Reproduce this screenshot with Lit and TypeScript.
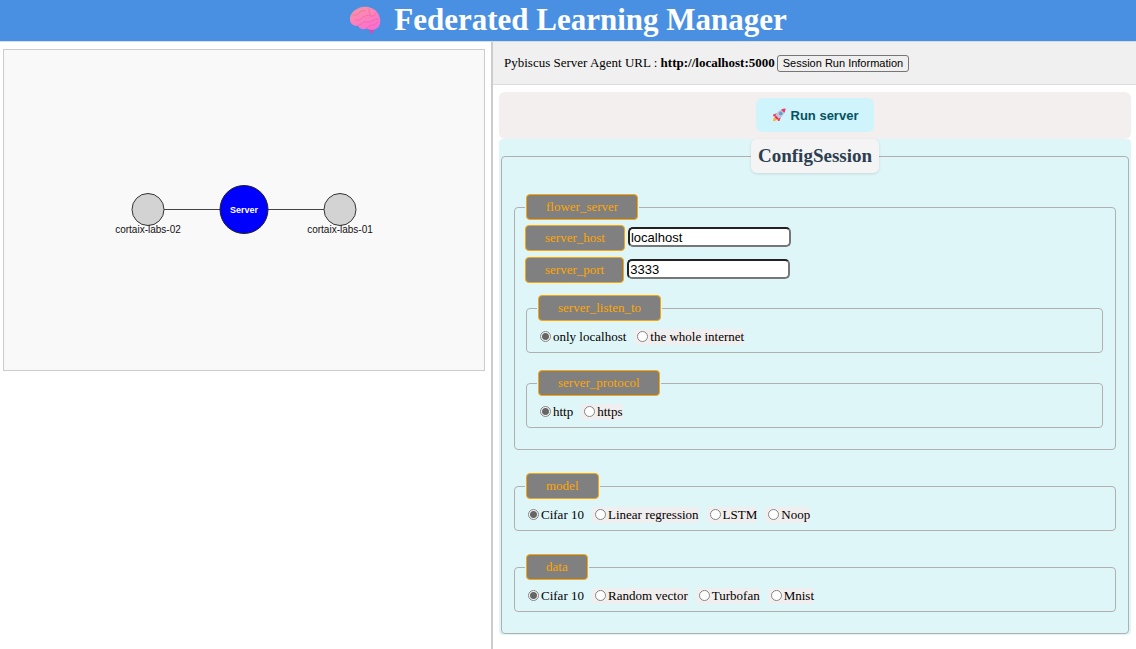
import { LitElement, html, css, svg } from "lit";
import { customElement, property } from "lit/decorators.js";

interface GraphNode {
  id: string;
  x: number;
  y: number;
}

const SERVER = { x: 240, y: 159.5, r: 24 };
const CLIENTS: GraphNode[] = [
  { id: "cortaix-labs-02", x: 144, y: 159.5 },
  { id: "cortaix-labs-01", x: 336, y: 159.5 },
];

@customElement("network-graph")
export class NetworkGraph extends LitElement {
  static styles = css`
    :host {
      display: block;
      border: 1px solid #ccc;
      background: #f9f9f9;
    }
    .canvas {
      display: block;
      width: 100%;
      height: auto;
      font-family: "Liberation Sans", Arial, sans-serif;
      font-size: 10px;
      text-anchor: middle;
    }
    .link {
      stroke: #444;
      stroke-width: 1;
    }
    .client {
      fill: #d3d3d3;
      stroke: #333;
      stroke-width: 1;
    }
    .server {
      fill: #0000ff;
      stroke: #222;
      stroke-width: 1;
    }
    .server-name {
      fill: #fff;
      font-size: 9px;
      font-weight: bold;
    }
    .client-name {
      fill: #111;
    }
  `;

  render() {
    return html`
      <svg class="canvas" viewBox="0 0 480 320" role="img" aria-label="Network">
        ${CLIENTS.map(
          (c) => svg`<line class="link" x1=${SERVER.x} y1=${SERVER.y} x2=${c.x} y2=${c.y}></line>`
        )}
        ${CLIENTS.map(
          (c) => svg`
            <circle class="client" cx=${c.x} cy=${c.y} r="16"></circle>
            <text class="client-name" x=${c.x} y="183">${c.id}</text>`
        )}
        <circle class="server" cx=${SERVER.x} cy=${SERVER.y} r=${SERVER.r}></circle>
        <text class="server-name" x=${SERVER.x} y="163">Server</text>
      </svg>
    `;
  }
}

@customElement("choice-group")
export class ChoiceGroup extends LitElement {
  @property() name = "";
  @property({ attribute: false }) options: string[] = [];

  static styles = css`
    :host {
      display: block;
    }
    .group {
      margin: 0;
      min-width: 0;
      padding: 8px 10px 7px;
      border: 1px solid #b0b0b0;
      border-radius: 4px;
    }
    .legend {
      padding: 0 1px;
    }
    .tag {
      display: block;
      box-sizing: border-box;
      height: 26px;
      padding: 0 19px;
      border: 1px solid orange;
      border-radius: 4px;
      background: #808080;
      color: orange;
      font-size: 13px;
      line-height: 24px;
    }
    .choices {
      display: flex;
      flex-wrap: wrap;
      gap: 8px;
    }
    .choice {
      display: flex;
      align-items: center;
      gap: 2px;
      height: 16px;
      padding-left: 3px;
      border-radius: 4px;
      background: #f0eeee;
      font-size: 13px;
      line-height: 16px;
    }
    .choice:has(.radio:checked) {
      background: transparent;
    }
    .radio {
      appearance: none;
      box-sizing: border-box;
      width: 11px;
      height: 11px;
      margin: 0 0 2px;
      border: 1px solid #858585;
      border-radius: 50%;
      background: #fff;
    }
    .radio:checked {
      background: radial-gradient(circle, #666 3px, #f4f4f4 4px);
    }
  `;

  render() {
    return html`
      <fieldset class="group">
        <legend class="legend"><span class="tag">${this.name}</span></legend>
        <div class="choices">
          ${this.options.map(
            (o, i) => html`<label class="choice"
              ><input class="radio" type="radio" name=${this.name} value=${o} ?checked=${i === 0} />${o}</label
            >`
          )}
        </div>
      </fieldset>
    `;
  }
}

const brain = html`<svg class="brain" viewBox="0 0 32 28" aria-hidden="true">
  <defs>
    <linearGradient id="brain-fill" x1="0" y1="0" x2="0.6" y2="1">
      <stop offset="0" stop-color="#f09a9c" />
      <stop offset="0.5" stop-color="#fd83b8" />
      <stop offset="1" stop-color="#fb6fd0" />
    </linearGradient>
  </defs>
  <path d="M19 21 L22 27.4 Q24 28.2 24 26 L24.500 21 Z" fill="#ee3fae" />
  <path
    d="M1 14 C0.500 9 4 5 8 3 C12 0.200 18 0 22 2 C27 3.500 30.500 8 31 13 C32 18 30 22 26 23.200 C23 24.500 20 23.600 18 22.500 C14 24.200 10 22.500 9 19.800 C5 20.500 1.500 18 1 14 Z"
    fill="url(#brain-fill)"
  />
  <g fill="none" stroke="#dc5fa0" stroke-width="0.800" stroke-linecap="round" opacity="0.600">
    <path d="M4 9 Q9 10 11 6 Q13 3.500 16 5" />
    <path d="M6 14 Q11 15 14 11 Q18 8 22 10" />
    <path d="M9 19.500 Q13 18.500 15 15.500 Q20 17.500 24 14.500" />
    <path d="M20 3 Q19 7 22 10 Q26 11 27 7" />
    <path d="M18 22 Q20 18.500 24 19 Q28 18.500 29 15" />
    <path d="M24 14.500 Q26 12.500 29 13" />
  </g>
</svg>`;

const rocket = html`<svg class="rocket" viewBox="0 0 14 14" aria-hidden="true">
  <path d="M1 13.200 Q0.800 10 3.200 9 L5.200 11 Q4 13.300 1 13.200 Z" fill="#ffb02e" />
  <path d="M4.800 5.200 L1.200 6.600 Q0.600 8 1.800 8.400 L4.600 8.600 Z" fill="#f83a5f" />
  <path d="M8.800 9.200 L7.600 12.800 Q6.200 13.600 5.600 12.200 L5.200 9.400 Z" fill="#f83a5f" />
  <path d="M3.200 9 Q4.500 3.800 9 1.800 L12.300 5 Q10.400 9.500 5.200 11 Z" fill="#c3c6dc" />
  <path d="M9 1.800 Q11 0.600 13.600 0.500 Q13.500 3 12.300 5 Z" fill="#f0386a" />
  <path d="M2.600 9 L4 7.800 L6.400 10.200 L5.200 11.600 Z" fill="#e0245e" />
  <circle cx="8.700" cy="5.400" r="1.500" fill="#4aa8e0" stroke="#7b86a0" stroke-width="0.600" />
</svg>`;

@customElement("app-root")
export class AppRoot extends LitElement {
  static styles = css`
    :host {
      display: flex;
      flex-direction: column;
      min-height: 100vh;
      background: #fff;
      color: #000;
      font-family: "Liberation Serif", "Times New Roman", serif;
      font-size: 13px;
    }
    .header {
      display: flex;
      justify-content: center;
      align-items: center;
      gap: 13px;
      height: 41px;
      border-bottom: 1px solid #d5dfec;
      background: #4a90e2;
    }
    .brain {
      width: 32px;
      height: 28px;
      margin-bottom: 1px;
    }
    .title {
      margin: 0 0 2px;
      color: #fff;
      font-size: 31px;
      line-height: 38px;
      font-weight: bold;
    }
    .columns {
      flex: 1;
      display: grid;
      grid-template-columns: minmax(0, 493fr) minmax(0, 643fr);
    }
    .left {
      padding: 7px 6px 0 3px;
      border-right: 2px solid #ccc;
    }
    .topbar {
      display: flex;
      align-items: center;
      gap: 2px;
      height: 42px;
      padding-left: 11px;
      border-bottom: 1px solid #ddd;
      background: #f0f0f0;
    }
    .session {
      height: 17px;
      padding: 0 5px;
      border: 1px solid #767676;
      border-radius: 3px;
      background: #efefef;
      color: #000;
      font-family: "Liberation Sans", Arial, sans-serif;
      font-size: 11px;
      line-height: 15px;
    }
    .content {
      padding: 7px 5px 0 6px;
    }
    .actions {
      display: flex;
      justify-content: center;
      padding: 6px 0 7px;
      border-radius: 6px;
      background: #f3efee;
    }
    .run {
      display: flex;
      align-items: center;
      gap: 5px;
      height: 34px;
      padding: 0 16px;
      border: 0;
      border-radius: 6px;
      background: #cff4fc;
      color: #055160;
      font-family: "Liberation Sans", Arial, sans-serif;
      font-size: 13px;
      font-weight: bold;
    }
    .rocket {
      width: 14px;
      height: 14px;
    }
    .config {
      padding: 0 2px 1px;
      border-radius: 4px;
      background: #dff6f8;
    }
    .session-set {
      display: flex;
      flex-direction: column;
      min-width: 0;
      margin: 0;
      padding: 21px 12px;
      border: 1px solid #b0b0b0;
      border-radius: 4px;
    }
    .session-title {
      margin: 0 auto;
      padding: 0 7px;
      border-radius: 6px;
      background: #f4f4f4;
      box-shadow: 0 1px 3px rgba(0, 0, 0, 0.12);
      color: #2c3e50;
      font-size: 19px;
      line-height: 34px;
      font-weight: bold;
    }
    .sections {
      display: grid;
      gap: 23px;
    }
    .server-set {
      min-width: 0;
      margin: 0;
      padding: 5px 12px 21px 10px;
      border: 1px solid #b0b0b0;
      border-radius: 4px;
    }
    .legend {
      padding: 0 1px;
    }
    .tag {
      display: block;
      box-sizing: border-box;
      height: 26px;
      padding: 0 19px;
      border: 1px solid orange;
      border-radius: 4px;
      background: #808080;
      color: orange;
      font-size: 13px;
      line-height: 24px;
    }
    .fields {
      display: grid;
      gap: 6px;
    }
    .field {
      display: flex;
      align-items: center;
      gap: 3px;
    }
    .text {
      box-sizing: border-box;
      width: 163px;
      height: 20px;
      padding: 0 1px;
      margin: 0 0 2px;
      border: 2px inset #767676;
      border-radius: 5px;
      background: #fff;
      color: #000;
      font-family: "Liberation Sans", Arial, sans-serif;
      font-size: 13px;
    }
    .nested {
      display: grid;
      gap: 17px;
      padding: 12px 0 0 1px;
    }
  `;

  render() {
    return html`
      <header class="header">
        ${brain}
        <h1 class="title">Federated Learning Manager</h1>
      </header>
      <main class="columns">
        <section class="left"><network-graph></network-graph></section>
        <section class="right">
          <div class="topbar">
            <span>Pybiscus Server Agent URL : <b>http://localhost:5000</b></span>
            <button class="session" type="button">Session Run Information</button>
          </div>
          <div class="content">
            <div class="actions">
              <button class="run" type="button">${rocket}<span>Run server</span></button>
            </div>
            <form class="config">
              <fieldset class="session-set">
                <legend class="session-title">ConfigSession</legend>
                <div class="sections">
                  <fieldset class="server-set">
                    <legend class="legend"><span class="tag">flower_server</span></legend>
                    <div class="fields">
                      <div class="field">
                        <label class="tag" for="host">server_host</label>
                        <input class="text" id="host" type="text" value="localhost" />
                      </div>
                      <div class="field">
                        <label class="tag" for="port">server_port</label>
                        <input class="text" id="port" type="text" value="3333" />
                      </div>
                    </div>
                    <div class="nested">
                      <choice-group
                        name="server_listen_to"
                        .options=${["only localhost", "the whole internet"]}
                      ></choice-group>
                      <choice-group name="server_protocol" .options=${["http", "https"]}></choice-group>
                    </div>
                  </fieldset>
                  <choice-group
                    name="model"
                    .options=${["Cifar 10", "Linear regression", "LSTM", "Noop"]}
                  ></choice-group>
                  <choice-group
                    name="data"
                    .options=${["Cifar 10", "Random vector", "Turbofan", "Mnist"]}
                  ></choice-group>
                </div>
              </fieldset>
            </form>
          </div>
        </section>
      </main>
    `;
  }
}
